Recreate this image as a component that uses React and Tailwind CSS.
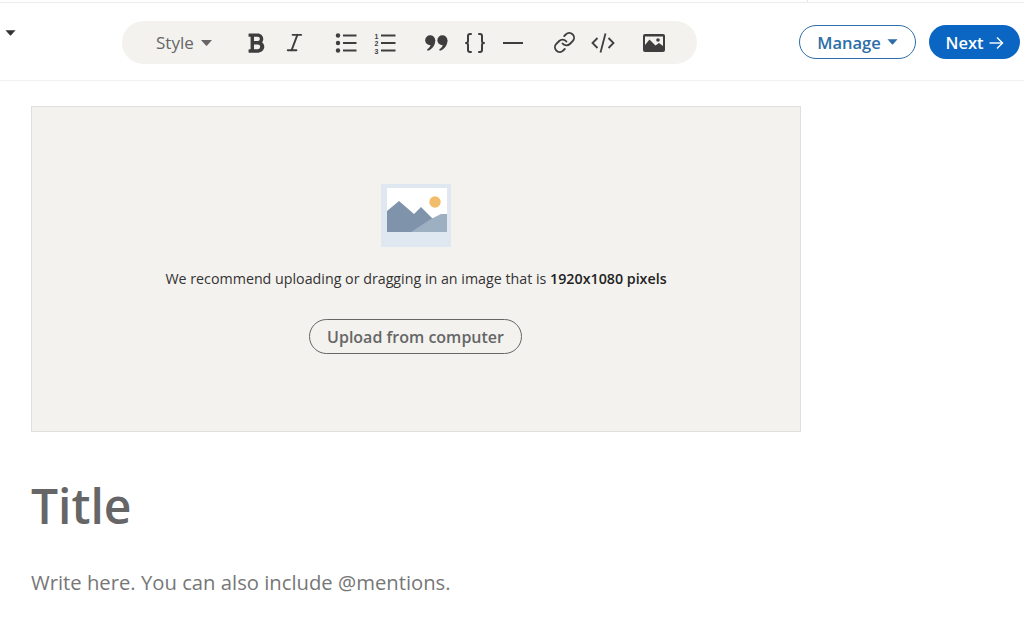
import React from 'react'
import { Braces, Italic, Link } from 'lucide-react'
import { FaBold } from 'react-icons/fa'

const font = "font-['Open_Sans','Noto_Sans',sans-serif]"

const Caret = ({ className }) => (
  <svg viewBox="0 0 12 6" className={className} fill="currentColor">
    <path d="M0.5 0h11L6.6 5.4a.8.8 0 0 1-1.2 0z" />
  </svg>
)

const ToolIcon = ({ children }) => (
  <div className="flex w-[38.5px] items-center justify-center text-[#3e3e3e]">{children}</div>
)

const ToolGroup = ({ children }) => <div className="flex items-center">{children}</div>

const BulletList = () => (
  <svg width="22" height="22" viewBox="0 0 22 22" fill="currentColor">
    <circle cx="3" cy="3.5" r="2.2" />
    <circle cx="3" cy="11" r="2.2" />
    <circle cx="3" cy="18.5" r="2.2" />
    <rect x="8" y="2.5" width="13.5" height="2" />
    <rect x="8" y="10" width="13.5" height="2" />
    <rect x="8" y="17.5" width="13.5" height="2" />
  </svg>
)

const NumberList = () => (
  <svg width="22" height="22" viewBox="0 0 22 22" fill="currentColor">
    <text x="0.5" y="6.5" fontSize="7" fontWeight="700" fontFamily="Liberation Sans">1</text>
    <text x="0.5" y="14" fontSize="7" fontWeight="700" fontFamily="Liberation Sans">2</text>
    <text x="0.5" y="21.5" fontSize="7" fontWeight="700" fontFamily="Liberation Sans">3</text>
    <rect x="7" y="2.5" width="14.5" height="2" />
    <rect x="7" y="10" width="14.5" height="2" />
    <rect x="7" y="17.5" width="14.5" height="2" />
  </svg>
)

const QuoteIcon = () => (
  <svg width="23" height="16" viewBox="0 0 23 16" fill="currentColor">
    <circle cx="5.2" cy="5.2" r="5" />
    <path d="M10.2 5.2C10.4 10 7.5 14.2 2.6 15.8L2 14.4C4.4 13 5.6 11.4 5.8 8.6z" />
    <circle cx="17.4" cy="5.2" r="5" />
    <path d="M22.4 5.2C22.6 10 19.7 14.2 14.8 15.8L14.2 14.4C16.6 13 17.8 11.4 18 8.6z" />
  </svg>
)

const CodeIcon = () => (
  <svg width="24" height="22" viewBox="0 0 24 22" fill="none" stroke="currentColor" strokeWidth="1.8">
    <path d="M6.5 6 1.5 11l5 5" />
    <path d="M17.5 6l5 5-5 5" />
    <path d="M14.5 1.5 9.5 20.5" />
  </svg>
)

const ImageIcon = () => (
  <svg width="22" height="18" viewBox="0 0 22 18" className="mr-[2px]">
    <rect width="22" height="18" rx="2" fill="currentColor" />
    <path d="M2 11V2.5h18V12l-4-3-3.5 2.5L6.5 5.5z" fill="#f3f2ef" />
    <circle cx="15" cy="6" r="1.8" fill="currentColor" />
  </svg>
)

const UploadPicture = () => (
  <svg width="70" height="63" viewBox="0 0 70 63">
    <rect width="70" height="63" fill="#dfe7f0" />
    <rect x="6" y="4" width="60" height="44" fill="#ffffff" />
    <circle cx="54" cy="18" r="5.7" fill="#f2bd6b" />
    <path d="M6 27 18 17 33 30 40 23 53 36V48H6z" fill="#7f93aa" />
    <path d="M30 48 50 35 60 30 66 30V48z" fill="#9db0c1" />
  </svg>
)

const App = () => {
  return (
    <div className={`${font} h-[626px] w-[1024px] overflow-hidden bg-white`}>
      <div className="h-[3px] border-b border-[#ececec] pl-[807px]">
        <div className="h-full w-px bg-[#e6e6e6]" />
      </div>

      {/* toolbar row */}
      <header className="flex h-[78px] items-center border-b border-[#f1f1f1] pl-[5px] pr-[4px] pt-[2px]">
        <Caret className="mb-[20px] h-[6px] w-[11px] text-[#333333]" />
        <div className="ml-[106px] flex h-[43px] w-[575px] items-center rounded-full bg-[#f3f2ef] pl-[34px]">
          <div className="flex w-[81px] items-center text-[#666666]">
            <span className="text-[17px]">Style</span>
            <Caret className="ml-[6px] h-[6px] w-[13px]" />
          </div>
          <div className="flex items-center gap-[13px]">
            <ToolGroup>
              <ToolIcon><FaBold size={22} /></ToolIcon>
              <ToolIcon><Italic size={23} strokeWidth={2} /></ToolIcon>
            </ToolGroup>
            <ToolGroup>
              <ToolIcon><BulletList /></ToolIcon>
              <ToolIcon><NumberList /></ToolIcon>
            </ToolGroup>
            <ToolGroup>
              <ToolIcon><QuoteIcon /></ToolIcon>
              <ToolIcon><Braces size={24} strokeWidth={2} /></ToolIcon>
              <ToolIcon><div className="h-[2px] w-[20px] bg-[#3e3e3e]" /></ToolIcon>
            </ToolGroup>
            <ToolGroup>
              <ToolIcon><Link size={23} strokeWidth={2} /></ToolIcon>
              <ToolIcon><CodeIcon /></ToolIcon>
            </ToolGroup>
            <ToolGroup>
              <ToolIcon><ImageIcon /></ToolIcon>
            </ToolGroup>
          </div>
        </div>

        <button className="mb-[2px] ml-auto flex h-[34px] w-[117px] items-center justify-center gap-[6px] rounded-full border border-[#2d6da8] pt-[4px] text-[16.5px] font-semibold text-[#2d6da8]">
          Manage
          <Caret className="mb-[4px] h-[6px] w-[11px]" />
        </button>
        <button className="mb-[2px] ml-[13px] flex h-[34px] w-[91px] items-center justify-center gap-[5px] rounded-full bg-[#0a66c2] pt-[4px] text-[16.5px] font-semibold text-white">
          Next
          <svg width="15" height="14" viewBox="0 0 15 14" fill="none" stroke="currentColor" strokeWidth="1.4" className="mb-[2px]">
            <path d="M0.5 7h13" />
            <path d="M8 1.5 13.5 7 8 12.5" />
          </svg>
        </button>
      </header>

      <main className="pl-[31px] pt-[25px]">
        <section className="flex h-[326px] w-[770px] flex-col items-center border border-[#e0dfdc] bg-[#f3f2ef] pt-[77px]">
          <UploadPicture />
          <p className="mt-[21px] text-[14.25px] leading-[22px] text-[#333333]">
            We recommend uploading or dragging in an image that is <span className="font-semibold text-[#222222]">1920x1080 pixels</span>
          </p>
          <button className="mt-[29px] mr-[1px] h-[35px] w-[213px] rounded-full border border-[#666666] text-[16px] font-semibold text-[#666666]">
            Upload from computer
          </button>
        </section>
        <h1 className="mt-[42px] text-[48px] font-semibold leading-[64px] text-[#666666]">Title</h1>
        <p className="mt-[30px] text-[20.25px] leading-[28px] text-[#777777]">Write here. You can also include @mentions.</p>
      </main>
    </div>
  )
}

export default App
